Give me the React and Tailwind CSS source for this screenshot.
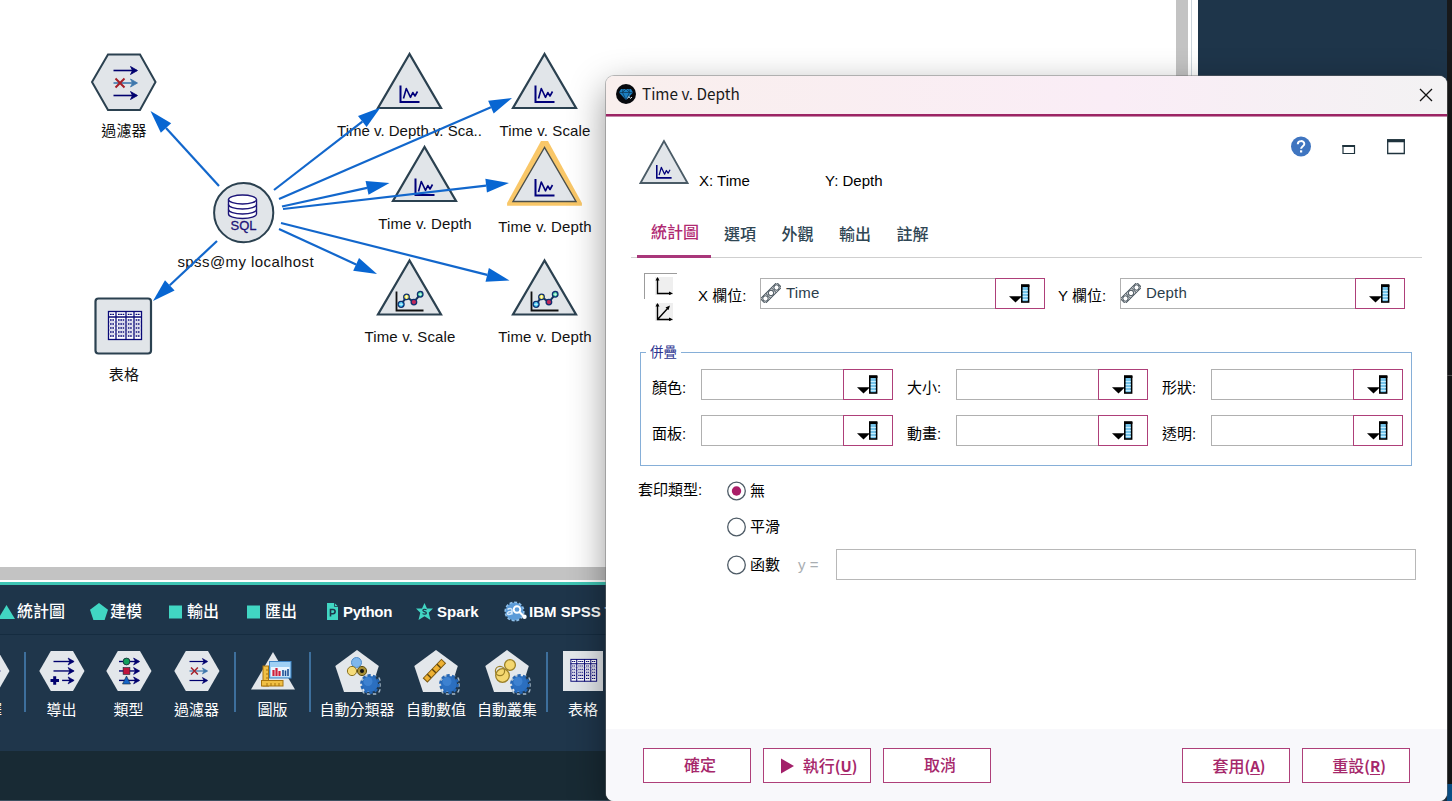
import React from "react";

const INK = "#00006e";

/* ---------- small glyphs ---------- */

function LineArrow({ y, x1 = 0, x2 = 22, color = INK }) {
  return (
    <g stroke={color} fill="none">
      <path d={`M${x1} ${y}H${x2 + 1}`} strokeWidth="1.6" />
      <path d={`M${x2 - 5} ${y - 4}L${x2 + 2} ${y}L${x2 - 5} ${y + 4}L${x2 - 3} ${y}Z`} fill={color} strokeWidth="0.8" />
    </g>
  );
}

function FilterGlyph() {
  return (
    <g>
      <LineArrow y={0} />
      <LineArrow y={12.5} color="#3f78ad" />
      <LineArrow y={25} />
      <path d="M2 8L11 17M11 8L2 17" stroke="#a52029" strokeWidth="2" />
    </g>
  );
}

function PlotGlyph() {
  return (
    <g fill="none" stroke="#00007a">
      <path d="M1 0V16.5H20" strokeWidth="2" />
      <path d="M4 13L6.8 3L11 11.8L13.3 7L15.5 10.5L18 6" strokeWidth="1.6" strokeLinejoin="round" />
    </g>
  );
}

function MultiPlotGlyph() {
  return (
    <g fill="none">
      <path d="M1 0V19H28" stroke="#111" strokeWidth="1.8" />
      <path d="M5.6 12.8L11 5.4L18.4 10.6L24.7 2.8" stroke="#16355a" strokeWidth="2" />
      <g strokeWidth="1.3" stroke="#103070">
        <circle cx="5.6" cy="12.8" r="3" fill="#25bdf0" />
        <circle cx="11" cy="5.4" r="2.8" fill="#f3e83c" />
        <circle cx="18.4" cy="10.6" r="2.8" fill="#c3285a" />
        <circle cx="24.7" cy="2.8" r="2.8" fill="#36d39a" />
      </g>
      <path d="M3.6 12.8h4M5.6 10.8v4M9.3 5.4h3.4M11 3.7v3.4M23 2.8h3.4M24.7 1.1v3.4" stroke="#fff" strokeWidth="0.7" />
    </g>
  );
}

function TableGlyph() {
  const rows = [3.3, 9, 13, 17, 21, 25];
  return (
    <g stroke="#0a0a78" fill="none">
      <rect x="0.5" y="0.5" width="33" height="28" fill="#fff" strokeWidth="1.3" />
      <path d="M8 0V29M18 0V29M26 0V29M0 6H34" strokeWidth="1.3" />
      <path d="M0 11H34M0 15H34M0 19H34M0 23H34" strokeWidth="0.3" />
      {rows.map((y) => (
        <path key={y} d={`M2 ${y}h4.5M10 ${y}h6.5M19.8 ${y}h4.7M27.6 ${y}h4.7`} strokeWidth="1.3" strokeDasharray="1.7 0.6" />
      ))}
    </g>
  );
}

function Gear() {
  return (
    <g>
      <rect x="-8" y="-8" width="18" height="18" rx="5" fill="none" stroke="#a9bccb" strokeWidth="1.4" strokeDasharray="3.4 2.6" />
      <circle cx="0" cy="0" r="8" fill="#2b6fc0" />
      <circle cx="0" cy="0" r="8.6" fill="none" stroke="#2566b4" strokeWidth="2.6" strokeDasharray="3.2 2.2" />
      <circle cx="-2" cy="-2.5" r="4.5" fill="#4a8edb" opacity="0.6" />
    </g>
  );
}

/* ---------- stream canvas ---------- */

function CanvasLabel({ x, y, cls = "tracking-[0.14px]", children }) {
  return (
    <div
      className={`absolute -translate-x-1/2 -translate-y-1/2 whitespace-nowrap text-[15px] leading-5 text-[#111] ${cls}`}
      style={{ left: x, top: y }}
    >
      {children}
    </div>
  );
}

function TriangleNode({ x, y, selected, multi }) {
  return (
    <g transform={`translate(${x} ${y})`}>
      {selected && <path d="M-3.5 -4.5H3.5L37.4 57.5V60.2H-37.4V57.5Z" fill="#f9c768" />}
      <path d="M0 2L-31.5 56H31.5Z" fill="#e1e5e9" stroke={selected ? "#4a4f4b" : "#2b4150"} strokeWidth={selected ? 1.4 : 2.2} />
      {multi ? (
        <g transform="translate(-14 33)"><MultiPlotGlyph /></g>
      ) : (
        <g transform="translate(-10 33.5)"><PlotGlyph /></g>
      )}
    </g>
  );
}

const LINKS = [
  [219, 186, 150.5, 111],
  [217, 241, 153, 301],
  [274, 190, 380.5, 107.5],
  [279, 199, 512, 98],
  [282, 206.5, 389.5, 183],
  [283, 209, 509, 183],
  [281, 223, 509.5, 280.5],
  [279, 229, 377, 274],
];

function Link({ p }) {
  const [x1, y1, x2, y2] = p;
  const d = Math.hypot(x2 - x1, y2 - y1);
  const ux = (x2 - x1) / d;
  const uy = (y2 - y1) / d;
  const bx = x2 - ux * 23;
  const by = y2 - uy * 23;
  return (
    <g>
      <path d={`M${x1} ${y1}L${bx} ${by}`} stroke="#1267cc" strokeWidth="2.2" />
      <path d={`M${x2} ${y2}L${bx - uy * 7} ${by + ux * 7}L${bx + uy * 7} ${by - ux * 7}Z`} fill="#0866d2" />
    </g>
  );
}

function StreamCanvas() {
  return (
    <div className="relative h-[567px] w-[1176px] bg-white">
      <svg className="absolute inset-0" width="1176" height="567">
        <path d="M108 54.5H140L155.5 82L140 110H108L92 82Z" fill="#e1e5e9" stroke="#2b4150" strokeWidth="2" />
        <g transform="translate(113.5 70.5)"><FilterGlyph /></g>
        <circle cx="243.7" cy="212.7" r="29.6" fill="#e1e5e9" stroke="#2b4150" strokeWidth="2" />
        <g stroke="#1c1478" strokeWidth="1.4" fill="#fff">
          <path d="M228.5 199.500V214c0 2.500 6 4.500 14 4.500s14-2 14-4.500V199.500" />
          <path d="M228.500 204.500c0 2.500 6 4.500 14 4.500s14-2 14-4.500M228.500 209.500c0 2.500 6 4.500 14 4.500s14-2 14-4.500" fill="none" />
          <ellipse cx="242.500" cy="199.500" rx="14" ry="4.500" />
        </g>
        <rect x="95.500" y="298.500" width="55.500" height="55" rx="3" fill="#e1e5e9" stroke="#2b4150" strokeWidth="2.200" />
        <g transform="translate(108 311)"><TableGlyph /></g>
        <TriangleNode x={409.5} y={52} />
        <TriangleNode x={544.5} y={52} />
        <TriangleNode x={424.5} y={145} />
        <TriangleNode x={544.5} y={145.5} selected />
        <TriangleNode x={409.5} y={258.5} multi />
        <TriangleNode x={544.5} y={258.5} multi />
      </svg>
      <div className="absolute left-[243.5px] top-[226px] -translate-x-1/2 -translate-y-1/2 text-[13px] leading-4 text-[#1c1478] [-webkit-text-stroke:0.3px_#1c1478]">SQL</div>
      <CanvasLabel x={124} y={131}>過濾器</CanvasLabel>
      <CanvasLabel x={245.7} y={262} cls="tracking-[0.42px]">spss@my localhost</CanvasLabel>
      <CanvasLabel x={124} y={375}>表格</CanvasLabel>
      <CanvasLabel x={409.5} y={131} cls="tracking-normal">Time v. Depth v. Sca..</CanvasLabel>
      <CanvasLabel x={545} y={131}>Time v. Scale</CanvasLabel>
      <CanvasLabel x={425} y={223.5}>Time v. Depth</CanvasLabel>
      <CanvasLabel x={545} y={227}>Time v. Depth</CanvasLabel>
      <CanvasLabel x={410} y={337}>Time v. Scale</CanvasLabel>
      <CanvasLabel x={545} y={337}>Time v. Depth</CanvasLabel>
      <svg className="absolute inset-0" width="1176" height="567">
        {LINKS.map((p, i) => (
          <Link key={i} p={p} />
        ))}
      </svg>
    </div>
  );
}

/* ---------- palette ---------- */

const TEAL = "#41d6c3";

function CategoryIcon({ kind }) {
  if (kind === "tri")
    return <svg width="15" height="16"><path d="M6.500 1L15 15H-2Z" fill={TEAL} /></svg>;
  if (kind === "pent")
    return <svg width="18" height="18"><path d="M9 0L18 6.800L14.600 17H3.400L0 6.800Z" fill={TEAL} /></svg>;
  if (kind === "sq")
    return <svg width="13" height="14"><rect y="0.500" width="13" height="13" fill={TEAL} /></svg>;
  if (kind === "py")
    return (
      <svg width="13" height="17">
        <path d="M1 0H8.500L12 3.500V17H1Z" fill={TEAL} />
        <path d="M8.500 0V3.500H12" fill="none" stroke="#1e354a" strokeWidth="0.800" />
        <path d="M4.500 13.500V6.500H7a2 2 0 0 1 0 4.200H4.500" fill="none" stroke="#1e354a" strokeWidth="1.600" />
      </svg>
    );
  if (kind === "spark")
    return (
      <svg width="17" height="17">
        <path d="M8.500 0L11 5.500H17L12.700 9.800L14.500 17L8.500 13.300L2.500 17L4.300 9.800L0 5.500H6Z" fill={TEAL} />
        <path d="M10.500 6.800C9 5.800 6.700 6.200 6.900 7.500C7.100 8.900 10.300 8.500 10.400 10C10.400 11.300 8 11.500 6.600 10.500" fill="none" stroke="#1e354a" strokeWidth="1.200" />
      </svg>
    );
  return (
    <svg width="24" height="21">
      <circle cx="10.500" cy="10.500" r="9" fill="#5b9bd8" />
      <circle cx="10.500" cy="10.500" r="9.300" fill="none" stroke="#8fc0ea" strokeWidth="1.600" strokeDasharray="3 1.800" />
      <path d="M3.500 8.500C5 7 8 7 8 9V13.500M8 10.500C3 10 2.500 13.500 5 13.500C6.500 13.500 8 12.500 8 11" fill="none" stroke="#d5e9fb" strokeWidth="1.500" />
      <circle cx="13" cy="8.500" r="3.300" fill="#5b9bd8" stroke="#fff" strokeWidth="1.900" />
      <path d="M15.500 11L19.500 15" stroke="#fff" strokeWidth="2.200" />
      <circle cx="20.500" cy="15.700" r="2.200" fill="#fff" />
    </svg>
  );
}

const CATEGORIES = [
  { kind: "tri", label: "統計圖", cls: "w-[90px] gap-[2px]" },
  { kind: "pent", label: "建模", cls: "w-[79px] gap-[2px]" },
  { kind: "sq", label: "輸出", cls: "w-[78px] gap-[5px]" },
  { kind: "sq", label: "匯出", cls: "w-[79px] gap-[5px]" },
  { kind: "py", label: "Python", cls: "w-[90px] gap-[4px] tracking-[-0.3px]" },
  { kind: "spark", label: "Spark", cls: "w-[88px] gap-[4px]" },
  { kind: "ibm", label: "IBM SPSS Text Analytics", cls: "gap-[1px]" },
];

const HEX = <path d="M11.800 1H34L45.500 21L34 41H11.800L0.300 21Z" fill="#e3e7eb" />;
const PENT = <path d="M22 0L43.800 16L35.500 42H9L0.300 16Z" fill="#e3e7eb" />;

function PaletteIcon({ kind }) {
  return (
    <svg width="48" height="46" className="overflow-visible">
      {kind === "select" && (<g>{HEX}<path d="M29 16.500L37 21L29 25.500Z" fill={INK} /><path d="M8 21H31" stroke={INK} strokeWidth="1.600" /></g>)}
      {kind === "derive" && (
        <g>{HEX}
          <g transform="translate(14.500 11.500) scale(0.860)"><LineArrow y={0} /><LineArrow y={11} /><LineArrow y={22} x1={10} /></g>
          <path d="M11.500 30.500H20M15.700 26.300V34.700" stroke={INK} strokeWidth="3" />
        </g>
      )}
      {kind === "type" && (
        <g>{HEX}
          <g transform="translate(13 11.500) scale(0.860)"><LineArrow y={0} /><LineArrow y={11} /><LineArrow y={22} /></g>
          <circle cx="20.500" cy="11.500" r="3.400" fill="#12a05c" stroke="#123" strokeWidth="0.800" />
          <rect x="17.100" y="17.600" width="6.800" height="6.800" fill="#c0143c" stroke="#123" strokeWidth="0.600" />
          <path d="M20.500 26L24.500 34H16.500Z" fill="#1464c8" stroke="#123" strokeWidth="0.600" />
        </g>
      )}
      {kind === "filter" && (<g>{HEX}<g transform="translate(15.500 11.500) scale(0.760)"><FilterGlyph /></g></g>)}
      {kind === "graph" && (
        <g>
          <path d="M22 2L44 39.500H0Z" fill="#e3e7eb" />
          <rect x="12" y="16" width="5.500" height="20" fill="#f0bf45" stroke="#a87410" strokeWidth="1" />
          <path d="M15 20h3M15 24h3M15 28h3" stroke="#a87410" />
          <rect x="10.500" y="30.500" width="21.500" height="5.500" fill="#f0bf45" stroke="#a87410" strokeWidth="1" />
          <path d="M16 33v3M20 33v3M24 33v3M28 33v3" stroke="#a87410" />
          <rect x="18.500" y="11.500" width="21.500" height="16.500" fill="#9fd0f4" stroke="#3f86c8" />
          <rect x="20" y="17" width="18.500" height="9.500" fill="#e8f5ff" />
          <path d="M22.500 26V20M25.500 26V18M28.500 26V21" stroke="#d0203a" strokeWidth="2.200" />
          <path d="M32 26V20M34.500 26V20.500M37 26V19" stroke="#1b4f94" strokeWidth="1.600" />
        </g>
      )}
      {kind === "classifier" && (
        <g>{PENT}
          <circle cx="21.500" cy="12.500" r="5" fill="#7fb7ec" stroke="#4f8dcb" />
          <circle cx="17" cy="21" r="4.600" fill="#f5dc7b" stroke="#8c7321" />
          <circle cx="27" cy="21" r="4.600" fill="#a89036" stroke="#5e4d12" />
          <circle cx="27" cy="21" r="2" fill="#111" />
          <g transform="translate(35 34)"><Gear /></g>
        </g>
      )}
      {kind === "numeric" && (
        <g>{PENT}
          <g transform="rotate(-46 20 21)">
            <rect x="7.500" y="18.300" width="26" height="5.600" fill="#eeb132" stroke="#7d5a12" />
            <path d="M13 18.500v5M20 18.500v5M27 18.500v5" stroke="#5e430b" strokeWidth="1.400" />
          </g>
          <g transform="translate(35 34)"><Gear /></g>
        </g>
      )}
      {kind === "cluster" && (
        <g>{PENT}
          <circle cx="25" cy="15" r="5.400" fill="#f4d770" stroke="#9b8027" strokeWidth="1.300" />
          <circle cx="17.500" cy="25.500" r="6.800" fill="#f4d770" stroke="#9b8027" strokeWidth="1.300" />
          <circle cx="15" cy="21" r="4.600" fill="none" stroke="#9b8027" strokeWidth="1.200" />
          <g transform="translate(35 34)"><Gear /></g>
        </g>
      )}
      {kind === "table" && (
        <g><rect y="1" width="40" height="40" fill="#e3e7eb" /><g transform="translate(7.500 9) scale(0.780)"><TableGlyph /></g></g>
      )}
    </svg>
  );
}

function PaletteItem({ kind, label, cls, pad }) {
  return (
    <div className={`flex shrink-0 flex-col items-center ${cls}`}>
      <div className={pad}>
        <PaletteIcon kind={kind} />
      </div>
      <div className="mt-[4px] whitespace-nowrap text-[15px] leading-5 text-white">{label}</div>
    </div>
  );
}

function Divider() {
  return <div className="mt-[2px] h-[60px] w-[2px] shrink-0 bg-[#3d6f9c]" />;
}

function Palette() {
  return (
    <div className="h-[216px] w-[1188px]">
      <div className="flex h-[49px] items-center overflow-hidden bg-[#1e354a] pt-[4px] text-[15px] font-bold text-white">
        {CATEGORIES.map((c, i) => (
          <div key={i} className={`flex h-[21px] shrink-0 items-center ${c.cls} ${i < 4 ? "text-[16px]" : ""}`}>
            <CategoryIcon kind={c.kind} />
            <span className={`whitespace-nowrap leading-5 ${i < 4 ? "font-medium" : ""}`}>{c.label}</span>
          </div>
        ))}
      </div>
      <div className="h-px bg-[#152c40]" />
      <div className="flex h-[116px] overflow-hidden bg-[#1f364b] pt-[15px]">
        <PaletteItem kind="select" label="選擇" cls="-ml-[36px] w-[46px]" pad="pl-[2px]" />
        <div className="w-[14px] shrink-0" />
        <Divider />
        <PaletteItem kind="derive" label="導出" cls="ml-[2px] w-[67px]" pad="pl-[3px]" />
        <PaletteItem kind="type" label="類型" cls="w-[67px]" pad="pl-[3px]" />
        <PaletteItem kind="filter" label="過濾器" cls="w-[69px]" pad="pl-[3px]" />
        <div className="w-[3px] shrink-0" />
        <Divider />
        <PaletteItem kind="graph" label="圖版" cls="w-[73px]" pad="pl-[4px]" />
        <Divider />
        <PaletteItem kind="classifier" label="自動分類器" cls="ml-[8px] w-[76px]" pad="pl-[4px]" />
        <PaletteItem kind="numeric" label="自動數值" cls="ml-[3px] w-[76px]" pad="pl-[4px]" />
        <PaletteItem kind="cluster" label="自動叢集" cls="w-[66px]" pad="pl-[4px]" />
        <div className="w-[6px] shrink-0" />
        <Divider />
        <PaletteItem kind="table" label="表格" cls="w-[70px]" pad="pl-[8px]" />
      </div>
      <div className="h-[49px] bg-[#182a34]" />
      <div className="h-px bg-[#3b5060]" />
    </div>
  );
}

/* ---------- dialog ---------- */

function PickerButton({ cls }) {
  return (
    <button className={`flex h-[31px] w-[50px] shrink-0 items-center justify-center border border-[#ae3f79] bg-white ${cls || ""}`}>
      <svg width="22" height="20">
        <path d="M0 12.200H13L6.500 18.500Z" fill="#000" />
        <rect x="12.800" y="1" width="6.800" height="17" fill="#74c3ea" stroke="#000" strokeWidth="1.600" />
        <path d="M12 2H20.400" stroke="#000" strokeWidth="2" />
        <path d="M13.800 6.500h5M13.800 9.500h5M13.800 12.500h5M13.800 15.500h5" stroke="#c9efff" strokeWidth="1" />
      </svg>
    </button>
  );
}

function RulerIcon() {
  return (
    <svg width="20" height="20" fill="none" stroke="#4a565f" strokeWidth="1">
      <g transform="rotate(-45 10 10)">
        <rect x="-1.500" y="6.600" width="23" height="6.800" rx="1" />
        <circle cx="2.200" cy="10" r="2.600" />
        <circle cx="10" cy="10" r="2.700" />
        <circle cx="17.800" cy="10" r="2.600" />
        <path d="M6 6.600V13.400M14 6.600V13.400" />
      </g>
    </svg>
  );
}

function FieldInput({ value, cls }) {
  return (
    <div className={`flex ${cls}`}>
      <div className="flex h-[31px] flex-1 items-center border border-r-0 border-[#b0b0b0] bg-white text-[15px] text-[#2b3d4b]">
        {value && (
          <div className="-mt-px flex items-center gap-[5px]">
            <RulerIcon />
            <span className="leading-5 tracking-[0.2px]">{value}</span>
          </div>
        )}
      </div>
      <PickerButton />
    </div>
  );
}

function OverlayField({ label }) {
  return (
    <div className="flex h-[31px] items-center">
      <span className="w-[49px] shrink-0 whitespace-nowrap pt-[6px] text-[15px] leading-5">{label}</span>
      <FieldInput cls="w-[192px]" />
    </div>
  );
}

function Radio({ label, checked, children, cls }) {
  return (
    <div className={`flex items-center ${cls || ""}`}>
      <svg width="20" height="20">
        <circle cx="10.500" cy="10" r="8.800" fill="#fff" stroke="#4e5b66" strokeWidth="1.300" />
        {checked && <circle cx="10.500" cy="10" r="4.700" fill="#aa1e68" />}
      </svg>
      <span className="ml-[4px] text-[15px] leading-5">{label}</span>
      {children}
    </div>
  );
}

function ActionButton({ icon, label, shortcut, cls }) {
  return (
    <button className={`flex h-[35px] w-[108px] items-center justify-center border border-[#ae3f79] bg-white text-[16px] font-medium leading-5 text-[#a6286b] ${cls}`}>
      {icon}
      <span className="whitespace-nowrap pt-px">
        {label}
        {shortcut && (
          <span className="font-['Noto_Sans_CJK_TC',sans-serif] text-[15px] font-bold">
            (<span className="underline underline-offset-2">{shortcut}</span>)
          </span>
        )}
      </span>
    </button>
  );
}

function PlotDialog() {
  return (
    <div className="absolute left-[606px] top-[76px] flex h-[725px] w-[841px] flex-col overflow-hidden rounded-[8px] bg-white text-black shadow-[0_0_0_1px_rgba(110,110,110,0.45),0_12px_36px_rgba(0,0,0,0.42)]">
      <div className="flex h-[38px] shrink-0 items-center bg-linear-to-r from-[#f9efed] via-[#faedf6] via-60% to-[#f3f2f3] pl-[10px] pr-[14px]">
        <svg width="20" height="20" className="-mt-[2px]">
          <circle cx="10" cy="10" r="10" fill="#07090d" />
          <path d="M5 5H15L17 8.500L10 16L3 8.500Z" fill="#1c7fc0" />
          <path d="M3 8.500H17M7 5L6.500 8.500L10 16L13.500 8.500L13 5M6.500 8.500L10 5L13.500 8.500" stroke="#0b3350" strokeWidth="0.700" fill="none" />
          <path d="M11.500 14.500L13 12.500L14.500 14.500L16 13" stroke="#cfe4ef" strokeWidth="1" fill="none" />
        </svg>
        <span className="-mt-[4px] ml-[6px] font-['Noto_Sans_CJK_TC','Noto_Sans',sans-serif] text-[15.3px] leading-5 text-[#1a1a1a]">Time v. Depth</span>
        <svg width="14" height="14" className="ml-auto" stroke="#111" strokeWidth="1.300"><path d="M1 1L13 13M13 1L1 13" /></svg>
      </div>
      <div className="h-[3px] shrink-0 border-b border-[#c78aab] bg-[#9c2464]" />

      <div className="flex h-[89px] shrink-0 pl-[33px]">
        <svg width="50" height="46" className="mt-[22px]">
          <path d="M25 2L1.500 44H48.500Z" fill="#e1e5e9" stroke="#4a5b66" strokeWidth="1.800" />
          <g transform="translate(17 26) scale(0.780)"><PlotGlyph /></g>
        </svg>
        <span className="ml-[10px] mt-[54px] w-[126px] text-[15px] leading-5">X: Time</span>
        <span className="mt-[54px] text-[15px] leading-5">Y: Depth</span>
        <div className="ml-auto mr-[42px] mt-[19px] flex h-[22px]">
          <svg width="20" height="21">
            <circle cx="10" cy="10.500" r="10" fill="#3f75c0" />
            <path d="M6.800 8.200C6.800 4.100 13.300 4.200 13.300 7.900C13.300 10.200 10.100 10.300 10.100 12.800" fill="none" stroke="#fff" strokeWidth="2" />
            <rect x="9" y="14.300" width="2.200" height="2.200" fill="#fff" />
          </svg>
          <svg width="14" height="20" className="ml-[31px]"><path d="M1 9.500H12.500V17.500H1Z" fill="#fff" stroke="#1f333d" strokeWidth="1.200" /><path d="M0.400 10H13" stroke="#1f333d" strokeWidth="2" /></svg>
          <svg width="18" height="20" className="ml-[31px]"><path d="M0.700 4H17.300V17.500H0.700Z" fill="#fff" stroke="#1f333d" strokeWidth="1.300" /><path d="M0 4.700H18" stroke="#1f333d" strokeWidth="3" /></svg>
        </div>
      </div>

      <div className="mx-[25px] flex h-[52px] shrink-0 text-[16px] font-medium leading-5 text-[#2f4654] shadow-[inset_0_-1px_0_#cfcfcf]">
        <div className="ml-[6px] flex w-[74px] justify-center border-b-[3px] border-[#a9377a] pt-[17px] text-[#b02a72]">
          <span className="pl-[2px]">統計圖</span>
        </div>
        <div className="ml-[13px] flex gap-[25.5px] pt-[19px]">
          <span>選項</span>
          <span>外觀</span>
          <span>輸出</span>
          <span>註解</span>
        </div>
      </div>

      <div className="flex h-[94px] shrink-0 pl-[38px]">
        <div className="mt-[15px] w-[33px]">
          <div className="h-[26px] border-l border-t border-[#9c9c9c] pl-[10px] pt-[3px]">
            <svg width="18" height="18"><rect width="18" height="18" fill="#efefef" /><path d="M2.500 1V16.500H16" fill="none" stroke="#000" strokeWidth="1.400" /><path d="M0.500 3.500L2.500 0L4.500 3.500ZM14 14.500L18 16.500L14 18Z" /></svg>
          </div>
          <div className="mt-[4px] pl-[11px]">
            <svg width="18" height="18"><rect width="18" height="18" fill="#efefef" /><path d="M2.500 1V16.500H16M2.500 16.500L13 5" fill="none" stroke="#000" strokeWidth="1.400" /><path d="M0.500 3.500L2.500 0L4.500 3.500ZM14 14.500L18 16.500L14 18ZM10.500 4.500L15 2.500L13.500 7Z" /></svg>
          </div>
        </div>
        <span className="ml-[21px] mt-[28px] w-[62px] shrink-0 text-[15px] leading-5">X 欄位:</span>
        <FieldInput value="Time" cls="mt-[20px] w-[285px] shrink-0" />
        <span className="ml-[13px] mt-[28px] w-[62px] shrink-0 text-[15px] leading-5">Y 欄位:</span>
        <FieldInput value="Depth" cls="mt-[20px] w-[285px] shrink-0" />
      </div>

      <div className="relative ml-[34px] h-[114px] w-[772px] shrink-0 border border-[#86afd8] pl-[11px] pt-[16px]">
        <span className="absolute -top-[8px] left-[5px] bg-white px-[4px] text-[13.500px] leading-4 text-[#2d3490]">併疊</span>
        <div className="flex gap-[14px]">
          <OverlayField label="顏色:" />
          <OverlayField label="大小:" />
          <OverlayField label="形狀:" />
        </div>
        <div className="mt-[15px] flex gap-[14px]">
          <OverlayField label="面板:" />
          <OverlayField label="動畫:" />
          <OverlayField label="透明:" />
        </div>
      </div>

      <div className="flex flex-1 pl-[32px]">
        <span className="mt-[14px] w-[88px] shrink-0 text-[15px] leading-5">套印類型:</span>
        <div className="pt-[15px]">
          <Radio label="無" checked />
          <Radio label="平滑" cls="mt-[16px]" />
          <Radio label="函數" cls="mt-[12px]">
            <span className="ml-[18px] text-[15px] leading-5 text-[#a9aeb2]">y =</span>
            <div className="ml-[18px] h-[31px] w-[580px] border border-[#b8b8b8] bg-white" />
          </Radio>
        </div>
      </div>

      <div className="flex h-[72px] shrink-0 bg-[#f8f8fb] pl-[37px] pr-[37px] pt-[19px]">
        <ActionButton label="確定" cls="pl-[6px]" />
        <ActionButton
          label="執行"
          shortcut="U"
          cls="ml-[12px] pl-[4px]"
          icon={<svg width="13" height="16" className="mr-[9px] shrink-0"><path d="M0 0.500L13 8L0 15.500Z" fill="#a3206a" /></svg>}
        />
        <ActionButton label="取消" cls="ml-[12px] pl-[6px]" />
        <ActionButton label="套用" shortcut="A" cls="ml-auto pl-[6px]" />
        <ActionButton label="重設" shortcut="R" cls="ml-[12px] pl-[6px]" />
      </div>
    </div>
  );
}

export default function App() {
  return (
    <div className="relative flex h-[801px] w-[1452px] overflow-hidden bg-white font-['Liberation_Sans','Noto_Sans_CJK_TC',sans-serif]">
      <div className="flex w-[1188px] shrink-0 flex-col">
        <div className="flex h-[567px]">
          <StreamCanvas />
          <div className="w-[12px] bg-[#c3c3c3]" />
        </div>
        <div className="h-[13px] bg-[#c3c3c3]" />
        <div className="h-[2px] bg-white" />
        <div className="h-[3px] bg-[#3fc4b4]" />
        <Palette />
      </div>
      <div className="w-[10px] shrink-0 bg-white pl-[3px]">
        <div className="h-full w-px bg-[#cdd5dc]" />
      </div>
      <div className="w-[249px] shrink-0 bg-[#1e354a]" />
      <div className="flex flex-1 flex-col bg-[#18191a]">
        <div className="h-[375px]" />
        <div className="h-px bg-[#5c5c5c]" />
        <div className="flex-1" />
        <div className="h-[17px] bg-[#0b5c9c]" />
      </div>
      <PlotDialog />
    </div>
  );
}
